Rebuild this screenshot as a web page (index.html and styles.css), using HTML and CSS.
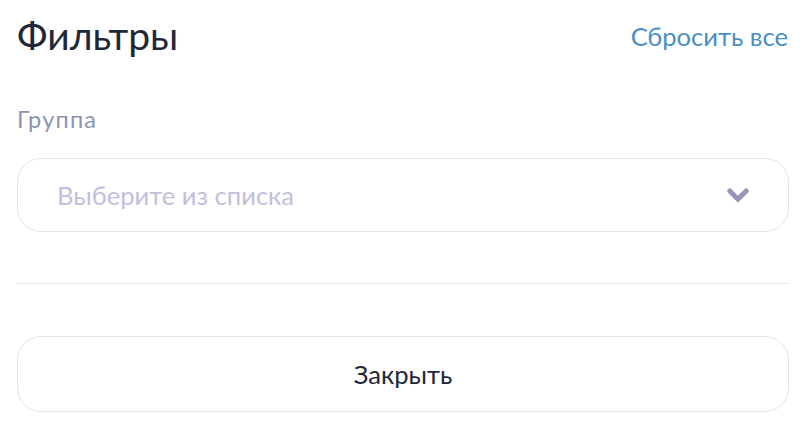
FILE: index.html
```html
<!DOCTYPE html>
<html lang="ru">
<head>
<meta charset="utf-8">
<link rel="stylesheet" href="styles.css">
</head>
<body>
<div class="panel">
  <div class="header">
    <h1 class="title">Фильтры</h1>
    <a class="reset">Сбросить все</a>
  </div>
  <div class="field">
    <div class="label">Группа</div>
    <div class="select">
      <span class="placeholder">Выберите из списка</span>
      <svg class="chevron" width="22" height="16" viewBox="0 0 22 16">
        <path d="M2.8 3 L11 11.2 L19.2 3" fill="none" stroke="#9896b4" stroke-width="5" stroke-linecap="round" stroke-linejoin="miter"/>
      </svg>
    </div>
  </div>
  <div class="divider"></div>
  <button class="close">Закрыть</button>
</div>
</body>
</html>
```
FILE: styles.css
```css
html, body {
  margin: 0;
  padding: 0;
  background: #ffffff;
}
body {
  font-family: Lato, "Noto Sans", sans-serif;
}
.panel {
  width: 772px;
  margin-left: 17px;
  padding-top: 12px;
  display: flex;
  flex-direction: column;
}
.header {
  display: flex;
  justify-content: space-between;
  align-items: center;
}
.title {
  margin: 0;
  font-size: 39px;
  font-weight: 400;
  color: #1e2838;
  line-height: 47px;
}
.reset {
  font-size: 25.6px;
  color: #4a8fc6;
  cursor: pointer;
  margin-right: 1px;
}
.field {
  margin-top: 46px;
  display: flex;
  flex-direction: column;
}
.label {
  font-size: 23.5px;
  letter-spacing: 1.2px;
  color: #8d92b3;
  line-height: 28px;
}
.select {
  margin-top: 25px;
  height: 74px;
  box-sizing: border-box;
  border: 1px solid #dde7ef;
  border-radius: 24px;
  display: flex;
  align-items: center;
  justify-content: space-between;
  padding: 0 39px 0 39px;
}
.placeholder {
  font-size: 25.6px;
  color: #c1c0dc;
}
.chevron {
  display: block;
  margin-top: 1px;
}
.divider {
  margin-top: 51px;
  height: 1px;
  background: #e1e9f0;
}
.close {
  margin-top: 52px;
  height: 76px;
  box-sizing: border-box;
  border: 1px solid #dde7ef;
  border-radius: 24px;
  background: #ffffff;
  padding: 0;
  font-family: Lato, "Noto Sans", sans-serif;
  font-size: 25.6px;
  color: #1e2838;
  cursor: pointer;
}
```
